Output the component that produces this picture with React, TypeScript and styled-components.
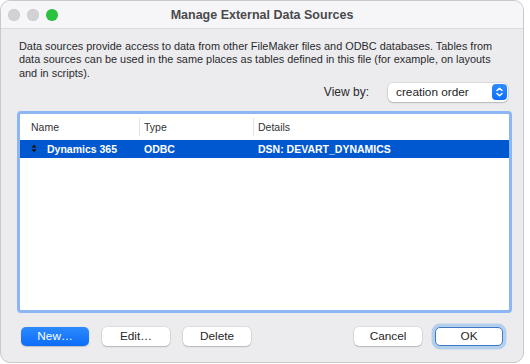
import React from "react";
import styled, { createGlobalStyle } from "styled-components";

const GlobalStyle = createGlobalStyle`
  html, body {
    margin: 0;
    padding: 0;
    background: #ffffff;
  }
  body {
    font-family: "Liberation Sans", Arial, sans-serif;
    -webkit-font-smoothing: antialiased;
  }
`;

const Window = styled.div`
  width: 524px;
  height: 363px;
  box-sizing: border-box;
  border: 1px solid #c9c9cc;
  border-radius: 10px;
  background: #ececef;
  overflow: hidden;
  display: flex;
  flex-direction: column;
`;

const TitleBar = styled.div`
  height: 27px;
  flex: none;
  display: flex;
  align-items: center;
  position: relative;
  background: #f6f6f8;
  border-bottom: 1px solid #dcdcdf;
`;

const Lights = styled.div`
  display: flex;
  gap: 7px;
  padding-left: 7px;
`;

const Light = styled.span<{ $color: string }>`
  width: 12px;
  height: 12px;
  border-radius: 50%;
  background: ${(p) => p.$color};
  box-shadow: inset 0 0 0 0.5px rgba(0, 0, 0, 0.08);
`;

const Title = styled.div`
  position: absolute;
  left: 0;
  right: 0;
  text-align: center;
  font-size: 12.5px;
  font-weight: 700;
  color: #4a4a4d;
  pointer-events: none;
`;

const Body = styled.div`
  flex: 1;
  display: flex;
  flex-direction: column;
  padding: 11px 11px 0 16px;
`;

const Description = styled.p`
  margin: 0 0 0 2px;
  font-size: 10.9px;
  line-height: 13.3px;
  color: #2a2a2c;
  white-space: nowrap;
`;

const ViewRow = styled.div`
  display: flex;
  justify-content: flex-end;
  align-items: center;
  gap: 19px;
  margin-top: 3px;
  padding-right: 4px;
`;

const ViewLabel = styled.span`
  font-size: 12px;
  color: #2a2a2c;
`;

const Select = styled.div`
  width: 120px;
  height: 19px;
  box-sizing: border-box;
  display: flex;
  align-items: center;
  justify-content: space-between;
  padding: 0 1px 0 8px;
  background: #ffffff;
  border-radius: 5px;
  box-shadow: 0 0 0 0.5px rgba(0, 0, 0, 0.14), 0 1px 1.5px rgba(0, 0, 0, 0.16);
  font-size: 11.8px;
  color: #242426;
`;

const Stepper = styled.span`
  width: 15px;
  height: 16px;
  border-radius: 4px;
  background: linear-gradient(#2f8cfd, #0f6ff9);
  display: flex;
  align-items: center;
  justify-content: center;
`;

const ListBox = styled.div`
  margin-top: 9px;
  height: 202px;
  box-sizing: border-box;
  border: 3px solid #8cb7f4;
  border-radius: 4px;
  background: #ffffff;
  display: flex;
  flex-direction: column;
`;

const Columns = "119px 114px 1fr";

const HeaderRow = styled.div`
  display: grid;
  grid-template-columns: ${Columns};
  height: 26px;
  align-items: center;
  font-size: 10.5px;
  color: #333335;
`;

const HeaderCell = styled.div<{ $first?: boolean }>`
  height: 18px;
  display: flex;
  align-items: center;
  padding-left: ${(p) => (p.$first ? "11px" : "4px")};
  border-left: ${(p) => (p.$first ? "none" : "1px solid #e2e2e4")};
`;

const DataRow = styled.div<{ $selected?: boolean }>`
  display: grid;
  grid-template-columns: ${Columns};
  height: 18px;
  align-items: center;
  font-size: 10.5px;
  font-weight: ${(p) => (p.$selected ? 700 : 400)};
  color: ${(p) => (p.$selected ? "#ffffff" : "#222")};
  background: ${(p) => (p.$selected ? "#0058d1" : "transparent")};
`;

const NameCell = styled.div`
  display: flex;
  align-items: center;
  gap: 10px;
  padding-left: 11px;
`;

const Cell = styled.div`
  padding-left: 5px;
`;

const ButtonRow = styled.div`
  display: flex;
  align-items: center;
  margin-top: 14px;
  padding-left: 4px;
  padding-right: 9px;
`;

const ButtonGroup = styled.div`
  display: flex;
  gap: 13px;
`;

const Spacer = styled.div`
  flex: 1;
`;

const Button = styled.button<{ $variant?: "primary" | "default" | "focus" }>`
  width: 68px;
  height: 19px;
  box-sizing: border-box;
  border-radius: 5px;
  font-family: inherit;
  font-size: 11.8px;
  padding: 0;
  cursor: default;
  color: ${(p) => (p.$variant === "primary" ? "#ffffff" : "#262628")};
  background: ${(p) =>
    p.$variant === "primary" ? "linear-gradient(#2c8afd, #0c6cf8)" : "#ffffff"};
  border: ${(p) => (p.$variant === "focus" ? "1px solid #3d78c8" : "none")};
  box-shadow: ${(p) =>
    p.$variant === "focus"
      ? "0 0 0 3.5px #b3cfec"
      : p.$variant === "primary"
      ? "0 0.5px 1px rgba(0, 0, 0, 0.2)"
      : "0 0 0 0.5px rgba(0, 0, 0, 0.12), 0 1px 1.5px rgba(0, 0, 0, 0.18)"};
`;

function SortIcon() {
  return (
    <svg width="6" height="9" viewBox="0 0 6 9">
      <path d="M3 0.5 L5.5 3.8 H0.5 Z" fill="#111" />
      <path d="M3 8.5 L5.5 5.2 H0.5 Z" fill="#111" />
    </svg>
  );
}

function Chevrons() {
  return (
    <svg width="9" height="12" viewBox="0 0 9 12">
      <path
        d="M2 4.6 L4.5 2.2 L7 4.6 M2 7.4 L4.5 9.8 L7 7.4"
        fill="none"
        stroke="#ffffff"
        strokeWidth="1.4"
        strokeLinecap="round"
        strokeLinejoin="round"
      />
    </svg>
  );
}

export default function App() {
  return (
    <>
      <GlobalStyle />
      <Window>
        <TitleBar>
          <Lights>
            <Light $color="#d2d2d4" />
            <Light $color="#d2d2d4" />
            <Light $color="#2ac33f" />
          </Lights>
          <Title>Manage External Data Sources</Title>
        </TitleBar>
        <Body>
          <Description>
            Data sources provide access to data from other FileMaker files and ODBC databases. Tables from
            <br />
            data sources can be used in the same places as tables defined in this file (for example, on layouts
            <br />
            and in scripts).
          </Description>
          <ViewRow>
            <ViewLabel>View by:</ViewLabel>
            <Select>
              <span>creation order</span>
              <Stepper>
                <Chevrons />
              </Stepper>
            </Select>
          </ViewRow>
          <ListBox>
            <HeaderRow>
              <HeaderCell $first>Name</HeaderCell>
              <HeaderCell>Type</HeaderCell>
              <HeaderCell>Details</HeaderCell>
            </HeaderRow>
            <DataRow $selected>
              <NameCell>
                <SortIcon />
                <span>Dynamics 365</span>
              </NameCell>
              <Cell>ODBC</Cell>
              <Cell>DSN: DEVART_DYNAMICS</Cell>
            </DataRow>
          </ListBox>
          <ButtonRow>
            <ButtonGroup>
              <Button $variant="primary">New…</Button>
              <Button>Edit…</Button>
              <Button>Delete</Button>
            </ButtonGroup>
            <Spacer />
            <ButtonGroup>
              <Button>Cancel</Button>
              <Button $variant="focus">OK</Button>
            </ButtonGroup>
          </ButtonRow>
        </Body>
      </Window>
    </>
  );
}
